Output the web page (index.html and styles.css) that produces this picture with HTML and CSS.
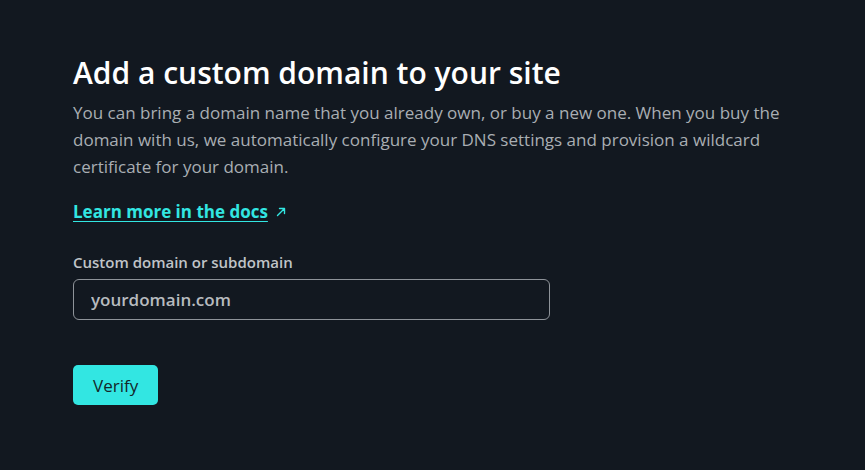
FILE: index.html
```html
<!DOCTYPE html>
<html lang="en">
<head>
<meta charset="utf-8">
<link rel="stylesheet" href="styles.css">
</head>
<body>
<main class="panel">
  <h1 class="title">Add a custom domain to your site</h1>
  <p class="lead">You can bring a domain name that you already own, or buy a new one. When you buy the domain with us, we automatically configure your DNS settings and provision a wildcard certificate for your domain.</p>
  <p class="docs"><a class="docs-link" href="#">Learn more in the docs</a><svg class="arrow" width="10" height="10" viewBox="0 0 10 10" aria-hidden="true"><path d="M1.5 8.5 L8.5 1.5 M3.5 1.5 H8.5 V6.5" fill="none" stroke="#32e6e2" stroke-width="1.4" stroke-linecap="round" stroke-linejoin="round"/></svg></p>
  <form class="form">
    <label class="label" for="domain">Custom domain or subdomain</label>
    <input class="input" id="domain" type="text" placeholder="yourdomain.com">
    <button class="btn" type="button">Verify</button>
  </form>
</main>
</body>
</html>
```

FILE: styles.css
```css
html, body {
  margin: 0;
  padding: 0;
  background: #121820;
}
body {
  font-family: "Open Sans", "Noto Sans", sans-serif;
  color: #a9aeb3;
  width: 865px;
  height: 470px;
  overflow: hidden;
}
.panel {
  padding: 53px 73px 0 73px;
  display: flex;
  flex-direction: column;
}
.title {
  margin: 0 0 6px;
  font-size: 30px;
  line-height: 40px;
  font-weight: 600;
  color: #ffffff;
}
.lead {
  margin: 0;
  font-size: 17px;
  line-height: 27px;
  max-width: 724px;
  color: #a9aeb3;
}
.docs {
  margin: 18px 0 0;
  font-size: 17px;
  line-height: 27px;
  display: flex;
  align-items: center;
}
.docs-link {
  color: #32e6e2;
  font-weight: 700;
  text-decoration: underline;
  text-underline-offset: 3px;
}
.arrow {
  margin-left: 8px;
  margin-top: 1px;
}
.form {
  margin-top: 27px;
  display: flex;
  flex-direction: column;
  align-items: flex-start;
}
.label {
  font-size: 15px;
  line-height: 20px;
  font-weight: 600;
  color: #c0c4c8;
  margin-bottom: 7px;
}
.input {
  box-sizing: border-box;
  width: 477px;
  height: 41px;
  padding: 0 17px;
  background: transparent;
  border: 1px solid #8e9399;
  border-radius: 6px;
  font-family: inherit;
  font-size: 17px;
  color: #ffffff;
}
.input::placeholder {
  color: #b7bbbf;
  font-weight: 600;
}
.btn {
  margin-top: 45px;
  box-sizing: border-box;
  height: 40px;
  padding: 0 20px;
  background: #32e6e2;
  border: 0;
  border-radius: 5px;
  font-family: inherit;
  font-size: 17px;
  font-weight: 500;
  color: #14262a;
}
```
